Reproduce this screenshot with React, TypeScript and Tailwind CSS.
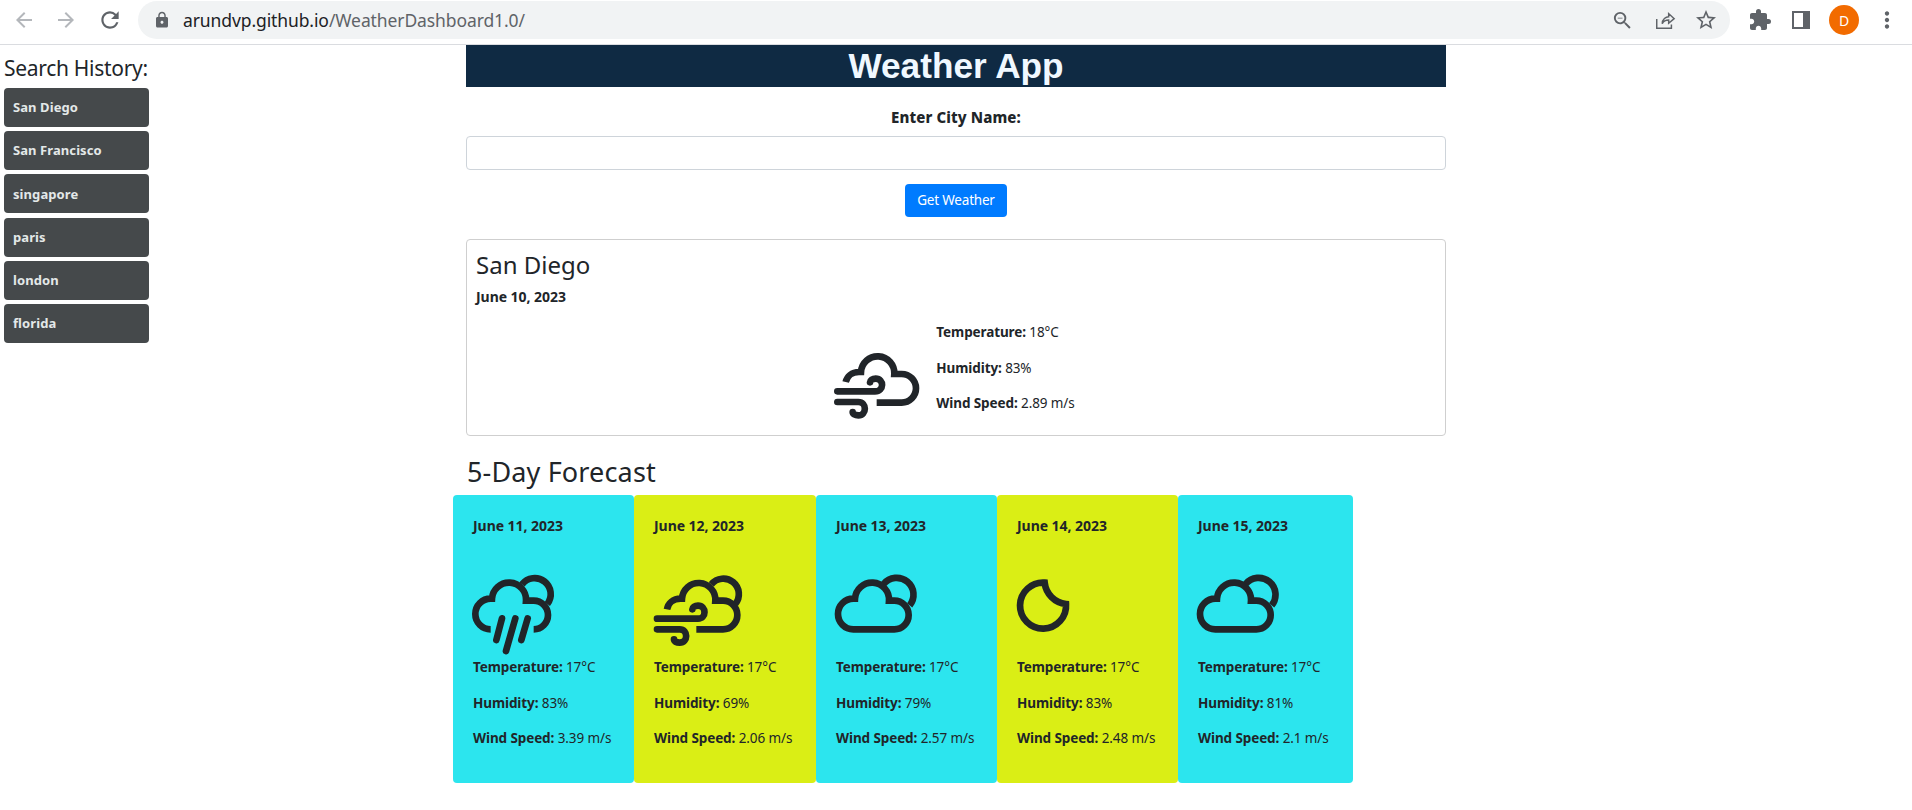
import { MdArrowBack, MdArrowForward, MdExtension, MdLock, MdMoreVert, MdRefresh, MdStarBorder, MdZoomOut } from "react-icons/md";

const history = ["San Diego", "San Francisco", "singapore", "paris", "london", "florida"];

function RainIcon() {
  return (
    <svg viewBox="23 30 240 240" className="h-20 w-20 overflow-visible" fill="none" stroke="#212529" strokeWidth="20" strokeLinecap="round">
      <path d="M205 190A43 43 0 0 0 248 147A43 43 0 0 0 205 104H182A50 50 0 0 0 80 98H76A46 46 0 0 0 76 190" strokeLinecap="butt" />
      <path d="M170 55A46 46 0 0 1 246 114" strokeLinecap="butt" />
      <path d="M110 157L93 222M150 157L122 255M187 157L168 222" />
    </svg>
  );
}

function WindSunIcon() {
  return (
    <svg viewBox="28 30 240 240" className="h-20 w-20 overflow-visible" fill="none" stroke="#212529" strokeWidth="20" strokeLinecap="round">
      <path d="M155 190H235A43 43 0 0 0 235 104H212A50 50 0 0 0 112 98H108C85 98 70 112 67 130" strokeLinecap="butt" />
      <path d="M200 55A46 46 0 0 1 272 114" strokeLinecap="butt" />
      <path d="M37 158H160C186 158 186 119 160 119C150 119 143 124 143 130" />
      <path d="M37 190H105C131 190 131 230 105 230C95 230 88 226 88 220" />
    </svg>
  );
}

function CloudIcon() {
  return (
    <svg viewBox="33 30 240 240" className="h-20 w-20 overflow-visible" fill="none" stroke="#212529" strokeWidth="20">
      <path d="M85 190H208A43 43 0 0 0 208 104H192A50 50 0 0 0 90 98H85A46 46 0 0 0 85 190Z" />
      <path d="M176 54A46 46 0 0 1 254 118" />
    </svg>
  );
}

function MoonIcon() {
  return (
    <svg viewBox="37 30 240 240" className="h-20 w-20 overflow-visible" fill="none" stroke="#212529" strokeWidth="20">
      <path d="M120 50A69 69 0 1 0 184 114A72 72 0 0 1 120 50Z" />
    </svg>
  );
}

function WindCloudIcon() {
  return (
    <svg viewBox="0 0 300 255" className="mb-[2px] h-[85px] w-[100px] shrink-0 self-end" fill="none" stroke="#212529" strokeWidth="20" strokeLinecap="round">
      <path d="M155 182H230A43 43 0 0 0 230 96H208A50 50 0 0 0 108 90H102C80 90 66 104 62 120" strokeLinecap="butt" />
      <path d="M37 148H150C178 148 178 110 152 110C142 110 135 115 135 121" />
      <path d="M37 180H100C126 180 126 220 100 220C90 220 83 216 83 210" />
    </svg>
  );
}

const forecast = [
  { date: "June 11, 2023", icon: <RainIcon />, hum: "83%", wind: "3.39 m/s", cls: "w-[181px] bg-[#2ce5ee]" },
  { date: "June 12, 2023", icon: <WindSunIcon />, hum: "69%", wind: "2.06 m/s", cls: "w-[182px] bg-[#daee15]" },
  { date: "June 13, 2023", icon: <CloudIcon />, hum: "79%", wind: "2.57 m/s", cls: "w-[181px] bg-[#2ce5ee]" },
  { date: "June 14, 2023", icon: <MoonIcon />, hum: "83%", wind: "2.48 m/s", cls: "w-[181px] bg-[#daee15]" },
  { date: "June 15, 2023", icon: <CloudIcon />, hum: "81%", wind: "2.1 m/s", cls: "w-[175px] bg-[#2ce5ee]" },
];

function Stat({ label, value }: { label: string; value: string }) {
  return (
    <p className="mb-[14.5px] h-[21px] whitespace-nowrap text-[13.5px] leading-[21px] tracking-[-0.1px]">
      <b className="font-bold">{label}:</b> {value}
    </p>
  );
}

function Toolbar() {
  return (
    <div className="flex h-[45px] items-start border-b border-[#dadce0] bg-white pt-px">
      <div className="flex h-[38px] w-[138px] items-center text-[#b4b7bb]">
        <MdArrowBack className="ml-[12px] text-[24px]" />
        <MdArrowForward className="ml-[18px] text-[24px]" />
        <MdRefresh className="ml-[19px] text-[26px] text-[#5f6368]" />
      </div>
      <div className="flex h-[38px] w-[1592px] items-center rounded-full bg-[#f1f3f4] text-[#5f6368]">
        <MdLock className="ml-[15px] text-[18px]" />
        <span className="ml-[12px] text-[17.5px] tracking-[-0.1px] text-[#5f6368]">
          <span className="text-[#202124]">arundvp.github.io</span>/WeatherDashboard1.0/
        </span>
        <MdZoomOut className="mr-[20px] ml-auto text-[23px]" />
        <svg viewBox="0 0 24 24" className="mr-[18px] h-[22px] w-[22px]" fill="none" stroke="#5f6368" strokeWidth="1.6">
          <path d="M3 11V21H19V17M9 16C9 11 13 8.5 16 8.5V5L22 10.5L16 15.5V12C13 12 10.5 13 9 16Z" />
        </svg>
        <MdStarBorder className="mr-[12px] text-[24px]" />
      </div>
      <div className="flex h-[38px] flex-1 items-center text-[#5f6368]">
        <MdExtension className="ml-[18px] text-[24px]" />
        <svg viewBox="0 0 18 18" className="ml-[20px] h-[18px] w-[18px]">
          <path fill="#5f6368" fillRule="evenodd" d="M0 0H18V18H0ZM2 2V16H11V2Z" />
        </svg>
        <div className="ml-[19px] flex h-[30px] w-[30px] items-center justify-center rounded-full bg-[#f26b00] text-[14px] text-white">D</div>
        <MdMoreVert className="ml-[15px] text-[26px]" />
      </div>
    </div>
  );
}

export default function App() {
  return (
    <div className="min-h-[810px] bg-white font-['Noto_Sans',sans-serif] text-[#212529]">
      <Toolbar />
      <div className="flex">
        <aside className="w-[466px] pl-[4px]">
          <h2 className="mt-[9px] mb-[5px] h-[29px] text-[21px] leading-[29px] tracking-[-0.3px] whitespace-nowrap">Search History:</h2>
          <div className="flex flex-col gap-[4.2px]">
            {history.map((city) => (
              <button key={city} className="h-[39px] w-[145px] rounded-[4px] bg-[#45494b] pt-px pl-[9px] text-left text-[13px] font-bold tracking-[0.08px] text-[#e3e8e8]">
                {city}
              </button>
            ))}
          </div>
        </aside>
        <main className="w-[980px]">
          <h1 className="h-[42px] bg-[#0f2a43] text-center font-['Liberation_Sans',sans-serif] text-[35.2px] leading-[42px] font-bold text-[#f0f8ff]">
            Weather App
          </h1>
          <div className="flex flex-col items-center">
            <label className="mt-[20px] h-[21px] text-[15px] leading-[21px] font-extrabold tracking-[0.1px]">Enter City Name:</label>
            <input className="mt-[8px] h-[34px] w-full rounded-[4px] border border-[#ced4da] bg-white" />
            <button className="mt-[14px] h-[33px] w-[102px] rounded-[4px] bg-[#007bff] text-[13.5px] tracking-[-0.2px] text-white">Get Weather</button>
          </div>
          <section className="mt-[22px] h-[197px] rounded-[4px] border border-[#cfcfcf] px-[9px] pt-[10px]">
            <h3 className="h-[29px] text-[24px] leading-[29px]">San Diego</h3>
            <p className="mt-[7px] h-[21px] text-[14px] leading-[21px] font-bold tracking-[-0.05px]">June 10, 2023</p>
            <div className="mt-[15px] flex justify-center">
              <WindCloudIcon />
              <div className="mr-[12px] ml-[11px]">
                <Stat label="Temperature" value="18°C" />
                <Stat label="Humidity" value="83%" />
                <Stat label="Wind Speed" value="2.89 m/s" />
              </div>
            </div>
          </section>
          <h2 className="mt-[19px] ml-px h-[34px] text-[27px] leading-[34px] tracking-[0.15px]">5-Day Forecast</h2>
          <div className="mt-[6px] -ml-[13px] flex">
            {forecast.map((day) => (
              <div key={day.date} className={`h-[288px] rounded-[4px] px-[20px] pt-[20px] ${day.cls}`}>
                <p className="h-[21px] text-[14px] leading-[21px] font-bold tracking-[-0.05px] whitespace-nowrap">{day.date}</p>
                <div className="mt-[39.5px] mb-[1.5px]">{day.icon}</div>
                <Stat label="Temperature" value="17°C" />
                <Stat label="Humidity" value={day.hum} />
                <Stat label="Wind Speed" value={day.wind} />
              </div>
            ))}
          </div>
        </main>
      </div>
    </div>
  );
}
